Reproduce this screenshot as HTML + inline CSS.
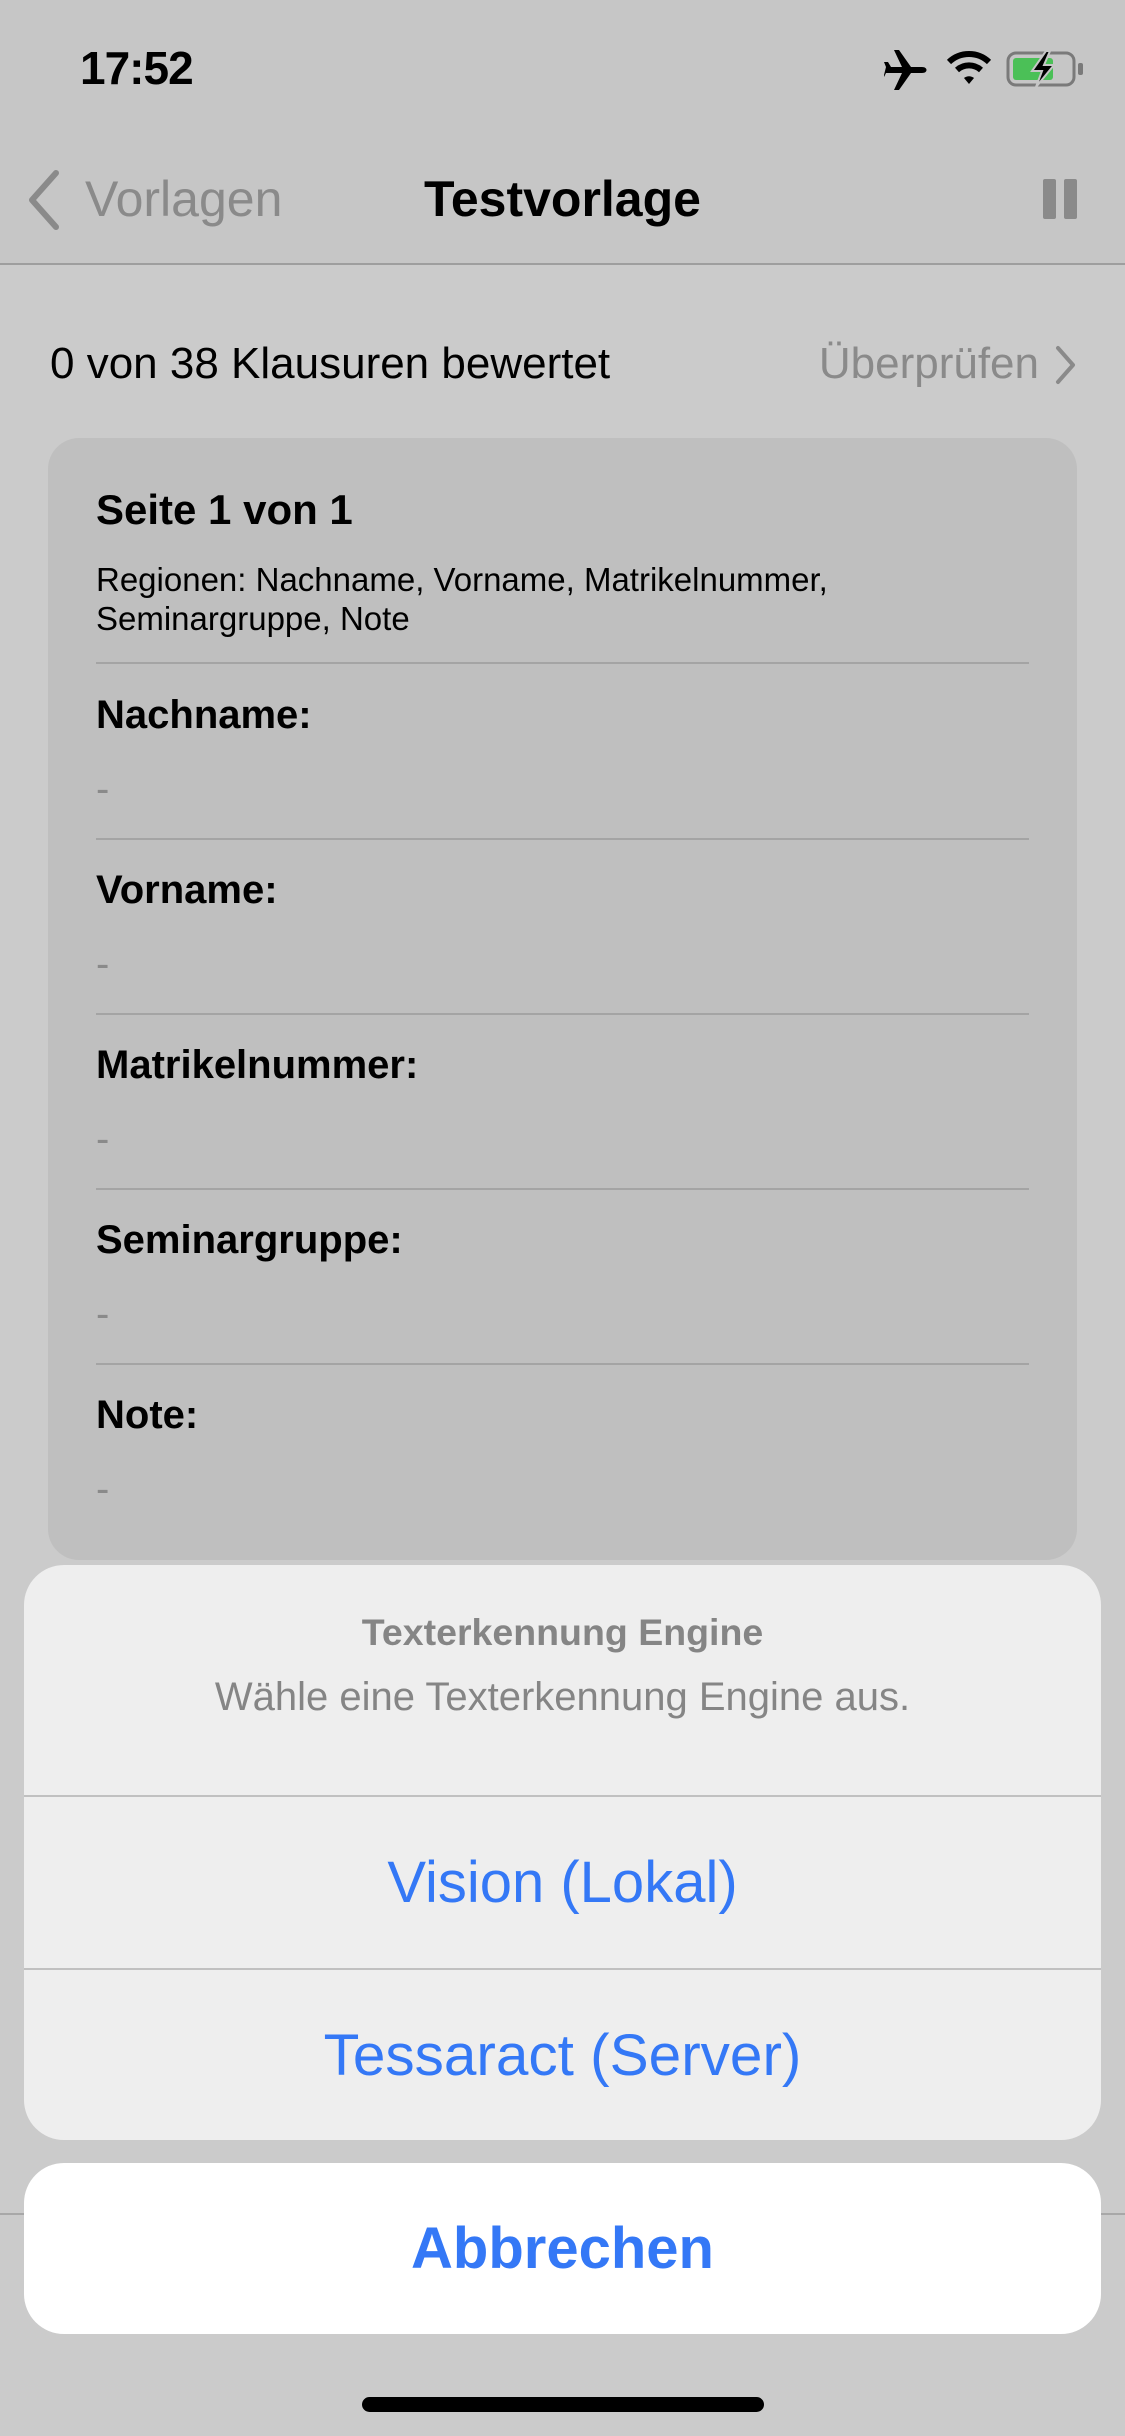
<!DOCTYPE html>
<html><head><meta charset="utf-8"><style>
*{margin:0;padding:0;box-sizing:border-box}
body{width:1125px;height:2436px;background:#cbcbcb;position:relative;overflow:hidden;font-family:"Liberation Sans",sans-serif;color:#000}
.a{position:absolute;white-space:nowrap}
.t{line-height:60px;height:60px}
.sep{position:absolute;height:2px;background:#a4a4a4}
</style></head><body>
<div class="a" style="left:0;top:0;width:1125px;height:264px;background:#c6c6c6"></div>
<div class="a" style="left:0;top:263px;width:1125px;height:2px;background:#9e9e9e"></div>
<div class="a t" style="left:80px;top:38px;font-size:46px;font-weight:bold;letter-spacing:-1px">17:52</div>
<svg class="a" style="left:884px;top:50px" width="46" height="40" viewBox="0 0 46 40"><path d="M2 17 L18 17 L10 0 L15 0 L27 17 L38 17 C44 17 44 23 38 23 L27 23 L15 40 L10 40 L18 23 L2 23 L-1 29 Z M2 17 L0 12 L4 12 L7 17 Z" fill="#000"/></svg>
<svg class="a" style="left:946px;top:50px" width="46" height="36" viewBox="0 0 46 36"><path d="M3 12 A29 29 0 0 1 43 12" stroke="#000" stroke-width="6" fill="none"/><path d="M11 20 A18 18 0 0 1 35 20" stroke="#000" stroke-width="6" fill="none"/><path d="M18 28 L23 34 L28 28 A8 8 0 0 0 18 28 Z" fill="#000"/></svg>
<svg class="a" style="left:1006px;top:51px" width="80" height="36" viewBox="0 0 80 36"><rect x="2" y="2" width="66" height="32" rx="8" fill="none" stroke="#7a7a7a" stroke-width="3"/><rect x="7" y="7" width="40" height="22" rx="3" fill="#4bc057"/><rect x="72" y="12" width="5" height="12" rx="2" fill="#7a7a7a"/><path d="M40 0 L26 20 L36 20 L30 36 L48 14 L38 14 L44 0 Z" fill="#000" stroke="#c6c6c6" stroke-width="2"/></svg>
<svg class="a" style="left:24px;top:169px" width="40" height="62" viewBox="0 0 40 62"><path d="M32 4 L8 31 L32 58" stroke="#8a8a8a" stroke-width="6" fill="none" stroke-linecap="round" stroke-linejoin="round"/></svg>
<div class="a t" style="left:85px;top:169px;font-size:50px;color:#8a8a8a">Vorlagen</div>
<div class="a t" style="left:0;width:1125px;text-align:center;top:169px;font-size:50px;font-weight:bold">Testvorlage</div>
<div class="a" style="left:1043px;top:179px;width:13px;height:40px;background:#8a8a8a;border-radius:2px"></div>
<div class="a" style="left:1064px;top:179px;width:13px;height:40px;background:#8a8a8a;border-radius:2px"></div>
<div class="a t" style="left:50px;top:334px;font-size:44px">0 von 38 Klausuren bewertet</div>
<div class="a t" style="right:86px;top:334px;font-size:44px;color:#8a8a8a">Überprüfen</div>
<svg class="a" style="left:1054px;top:344px" width="24" height="42" viewBox="0 0 24 42"><path d="M4 4 L19 21 L4 38" stroke="#8a8a8a" stroke-width="4" fill="none" stroke-linecap="round" stroke-linejoin="round"/></svg>
<div class="a" style="left:48px;top:438px;width:1029px;height:1122px;background:#bfbfbf;border-radius:31px"></div>
<div class="a t" style="left:96px;top:480px;font-size:42px;font-weight:bold">Seite 1 von 1</div>
<div class="a" style="left:96px;top:560px;font-size:33px;line-height:39px">Regionen: Nachname, Vorname, Matrikelnummer,<br>Seminargruppe, Note</div>
<div class="sep" style="left:96px;top:662px;width:933px"></div>
<div class="a t" style="left:96px;top:685px;font-size:40px;font-weight:bold">Nachname:</div>
<div class="a t" style="left:96px;top:759px;font-size:40px;color:#8a8a8a">-</div>
<div class="sep" style="left:96px;top:838px;width:933px"></div>
<div class="a t" style="left:96px;top:860px;font-size:40px;font-weight:bold">Vorname:</div>
<div class="a t" style="left:96px;top:934px;font-size:40px;color:#8a8a8a">-</div>
<div class="sep" style="left:96px;top:1013px;width:933px"></div>
<div class="a t" style="left:96px;top:1035px;font-size:40px;font-weight:bold">Matrikelnummer:</div>
<div class="a t" style="left:96px;top:1109px;font-size:40px;color:#8a8a8a">-</div>
<div class="sep" style="left:96px;top:1188px;width:933px"></div>
<div class="a t" style="left:96px;top:1210px;font-size:40px;font-weight:bold">Seminargruppe:</div>
<div class="a t" style="left:96px;top:1284px;font-size:40px;color:#8a8a8a">-</div>
<div class="sep" style="left:96px;top:1363px;width:933px"></div>
<div class="a t" style="left:96px;top:1385px;font-size:40px;font-weight:bold">Note:</div>
<div class="a t" style="left:96px;top:1459px;font-size:40px;color:#8a8a8a">-</div>
<div class="a" style="left:0;top:2213px;width:1125px;height:2px;background:#a8a8a8"></div>
<div class="a" style="left:24px;top:1565px;width:1077px;height:575px;background:#eeeeee;border-radius:40px;overflow:hidden">
 <div class="a t" style="left:0;width:1077px;text-align:center;top:37px;font-size:37.5px;font-weight:bold;color:#858585">Texterkennung Engine</div>
 <div class="a t" style="left:0;width:1077px;text-align:center;top:102px;font-size:40px;color:#858585">Wähle eine Texterkennung Engine aus.</div>
 <div class="a" style="left:0;top:230px;width:1077px;height:2px;background:#c0c0c0"></div>
 <div class="a t" style="left:0;width:1077px;text-align:center;top:288px;font-size:58px;color:#3478f6">Vision (Lokal)</div>
 <div class="a" style="left:0;top:403px;width:1077px;height:2px;background:#c0c0c0"></div>
 <div class="a t" style="left:0;width:1077px;text-align:center;top:461px;font-size:58.5px;color:#3478f6">Tessaract (Server)</div>
</div>
<div class="a" style="left:24px;top:2163px;width:1077px;height:171px;background:#fff;border-radius:40px"></div>
<div class="a t" style="left:0;width:1125px;text-align:center;top:2219px;font-size:58px;font-weight:bold;color:#3478f6">Abbrechen</div>
<div class="a" style="left:362px;top:2397px;width:402px;height:15px;background:#000;border-radius:8px"></div>
</body></html>
